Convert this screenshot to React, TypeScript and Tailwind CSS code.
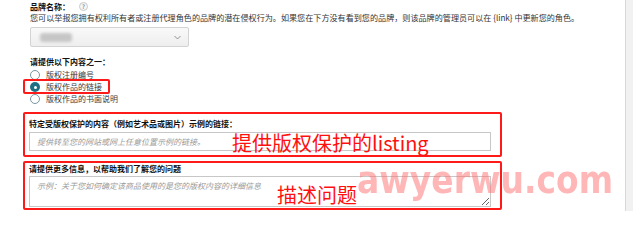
import React from 'react'

const font = "font-['Noto_Sans_CJK_SC','Noto_Sans',sans-serif]"

const Radio = ({ checked, label }: { checked?: boolean; label: string }) => (
  <div className="flex h-[12px] items-center">
    {checked ? (
      <span className="flex h-[10px] w-[10px] items-center justify-center rounded-full bg-[#1f6f84]">
        <span className="h-[3px] w-[3px] rounded-full bg-white" />
      </span>
    ) : (
      <span className="h-[10px] w-[10px] rounded-full border border-[#7b95a0] bg-white" />
    )}
    <span className="ml-[6px] text-[8px] leading-[10px] text-[#3a3a3a]">{label}</span>
  </div>
)

const App = () => {
  return (
    <div className={`flex h-[211px] w-[633px] overflow-hidden bg-white ${font}`}>
      <div className="relative flex-1 overflow-hidden pl-[30px] pt-[2px]">
        {/* brand name */}
        <div className="flex h-[9px] items-center gap-[9px]">
          <span className="text-[8px] font-bold leading-[9px] text-[#111]">品牌名称：</span>
          <span className="flex h-[9px] w-[9px] items-center justify-center rounded-full border border-[#c9c9c9] bg-[#f6f6f6] text-[6px] leading-none text-[#555]">
            ?
          </span>
        </div>
        <p className="mt-[2px] h-[9px] whitespace-nowrap text-[8.1px] leading-[9px] text-[#333]">
          您可以举报您拥有权利所有者或注册代理角色的品牌的潜在侵权行为。如果您在下方没有看到您的品牌，则该品牌的管理员可以在 {'{link}'} 中更新您的角色。
        </p>
        <div className="mt-[5px] flex h-[20px] w-[159px] items-center justify-between rounded-[2px] border border-[#d3d3d3] bg-gradient-to-b from-[#f9f9f9] to-[#eeeeee] pl-[9px] pr-[7px]">
          <span className="h-[9px] w-[32px] rounded-[3px] bg-[#c6c6c6] blur-[1.5px]" />
          <svg width="7" height="5" viewBox="0 0 7 5">
            <polyline points="0.5,1 3.5,4 6.5,1" fill="none" stroke="#888" strokeWidth="0.9" />
          </svg>
        </div>

        {/* options */}
        <p className="mt-[10px] h-[10px] text-[8px] font-bold leading-[10px] text-[#111]">请提供以下内容之一：</p>
        <div className="mt-[2px] flex flex-col">
          <Radio label="版权注册编号" />
          <div className="relative">
            <Radio checked label="版权作品的链接" />
            <span className="pointer-events-none absolute left-[-7px] top-[-2px] h-[15px] w-[87px] rounded-[2px] border-2 border-[#ff1a1a]" />
          </div>
          <Radio label="版权作品的书面说明" />
        </div>

        {/* link field */}
        <div className="relative ml-[-7px] mt-[7px] w-[479px] rounded-[2px] border-2 border-[#ff1a1a] pb-[4px] pl-[4px] pr-[9px] pt-[5px]">
          <p className="h-[10px] text-[8px] font-bold leading-[10px] text-[#111]">
            特定受版权保护的内容（例如艺术品或图片）示例的链接：
          </p>
          <input
            className="mt-[3px] block h-[19px] w-full border border-[#c7c7c7] bg-white px-[7px] text-[8px] outline-none placeholder:italic placeholder:text-[#9a9a9a]"
            placeholder="提供转至您的网站或网上任意位置示例的链接。"
          />
          <span className="pointer-events-none absolute left-[207px] top-[18px] whitespace-nowrap text-[20px] leading-[22px] text-[#ff1010]">
            提供版权保护的listing
          </span>
        </div>

        {/* more info */}
        <div className="relative ml-[-7px] mt-[4px] w-[479px] rounded-[2px] border-2 border-[#ff1a1a] pb-[1px] pl-[4px] pr-[9px] pt-[1px]">
          <p className="h-[10px] text-[8px] font-bold leading-[10px] text-[#111]">
            请提供更多信息，以帮助我们了解您的问题
          </p>
          <textarea
            className="mt-[2px] block h-[31px] w-full resize border border-[#c7c7c7] bg-white px-[7px] py-[4px] text-[8px] leading-[10px] outline-none placeholder:italic placeholder:text-[#9a9a9a]"
            placeholder="示例：关于您如何确定该商品使用的是您的版权内容的详细信息"
          />
          <span className="pointer-events-none absolute left-[252px] top-[21px] whitespace-nowrap text-[20px] leading-[22px] text-[#ff1010]">
            描述问题
          </span>
        </div>

        {/* watermark */}
        <span className="pointer-events-none absolute left-[357px] top-[163px] origin-bottom scale-y-[1.12] whitespace-nowrap font-['DejaVu_Sans',sans-serif] text-[33px] font-bold leading-[40px] text-[rgba(255,110,110,0.5)]">
          awyerwu.com
        </span>
      </div>
      <div className="w-[8px] shrink-0 border-l border-[#d8d8d8] bg-[#f1f1f1]" />
    </div>
  )
}

export default App
